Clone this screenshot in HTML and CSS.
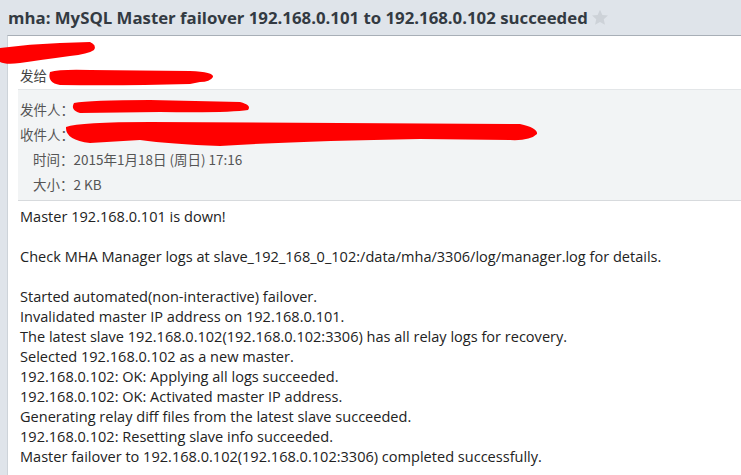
FILE: index.html
```html
<!DOCTYPE html>
<html lang="zh-CN">
<head>
<meta charset="utf-8">
<title>mha mail</title>
<link rel="stylesheet" href="styles.css">
</head>
<body>
<div class="titlebar">
  <span class="subject">mha: MySQL Master failover 192.168.0.101 to 192.168.0.102 succeeded</span>
  <svg class="star" width="18" height="17" viewBox="0 0 24 23"><path d="M12 1l3.2 7 7.6.8-5.7 5.1 1.6 7.5L12 17.6 5.3 21.4l1.6-7.5L1.2 8.8l7.6-.8z" fill="#cdd2d8"/></svg>
</div>
<div class="panel">
  <div class="sendto">发给</div>
  <div class="meta">
    <div class="row">发件人：</div>
    <div class="row">收件人：</div>
    <div class="row indent">时间：2015年1月18日 (周日) 17:16</div>
    <div class="row indent">大小：2 KB</div>
  </div>
  <div class="body">
    <p>Master 192.168.0.101 is down!</p>
    <p>Check MHA Manager logs at slave_192_168_0_102:/data/mha/3306/log/manager.log for details.</p>
    <p>Started automated(non-interactive) failover.<br>
Invalidated master IP address on 192.168.0.101.<br>
The latest slave 192.168.0.102(192.168.0.102:3306) has all relay logs for recovery.<br>
Selected 192.168.0.102 as a new master.<br>
192.168.0.102: OK: Applying all logs succeeded.<br>
192.168.0.102: OK: Activated master IP address.<br>
Generating relay diff files from the latest slave succeeded.<br>
192.168.0.102: Resetting slave info succeeded.<br>
Master failover to 192.168.0.102(192.168.0.102:3306) completed successfully.</p>
  </div>
  <svg class="redact" width="741" height="160" viewBox="0 0 741 160">
    <g fill="#ff0000">
      <path d="M0 12 Q30 8 60 7 L90 6 Q97 9 94 14 Q88 18 70 20 Q40 24 20 27 Q6 29 0 26 Z"/>
      <path d="M50 36 Q60 33 90 34 L190 35 Q214 36 213 41 Q210 46 200 46 L190 48 Q120 50 60 49 Q47 47 50 36 Z"/>
      <path d="M74 67 Q90 64 150 64 L240 66 Q252 69 248 74 Q230 77 160 76 L80 77 Q70 74 74 67 Z"/>
      <path d="M66 91 Q80 86 150 86 L520 88 Q538 92 537 98 Q530 105 510 104 L420 103 Q300 105 220 110 Q170 108 140 104 L90 107 Q65 104 66 91 Z"/>
    </g>
  </svg>
</div>
</body>
</html>
```
FILE: styles.css
```css
html, body {
  margin: 0;
  padding: 0;
}
body {
  width: 741px;
  height: 475px;
  overflow: hidden;
  background: #dfe4ea;
  font-family: "Open Sans", "Noto Sans CJK SC", sans-serif;
  color: #333;
}
.titlebar {
  height: 35px;
  display: flex;
  align-items: center;
  padding-left: 8px;
  gap: 3px;
}
.subject {
  font-family: "Open Sans", sans-serif;
  font-weight: 700;
  font-size: 16.8px;
  color: #333a42;
}
.star {
  margin-top: -1px;
}
.panel {
  position: relative;
  margin-left: 7px;
  height: 440px;
  background: #fff;
  border-top: 1px solid #a8afb7;
  border-left: 1px solid #cdd3d9;
}
.sendto {
  font-family: "Noto Sans CJK SC", sans-serif;
  font-size: 13.5px;
  color: #444;
  padding: 29px 0 0 12px;
  height: 24px;
  line-height: 20px;
}
.meta {
  margin-left: 10px;
  background: #f2f4f5;
  border-top: 1px solid #e3e6e8;
  border-bottom: 1px solid #d7dadd;
  padding: 7px 0 5px 0;
  height: 98px;
  font-family: "Noto Sans CJK SC", sans-serif;
  font-size: 13.5px;
  color: #555;
}
.row {
  height: 25px;
  line-height: 25px;
  padding-left: 2px;
}
.indent {
  padding-left: 15px;
}
.body {
  padding: 5px 0 0 12px;
  font-size: 14.55px;
  line-height: 20px;
  color: #222;
}
.body p {
  margin: 0 0 20px 0;
}
.redact {
  position: absolute;
  left: -8px;
  top: 0;
  pointer-events: none;
}
```
